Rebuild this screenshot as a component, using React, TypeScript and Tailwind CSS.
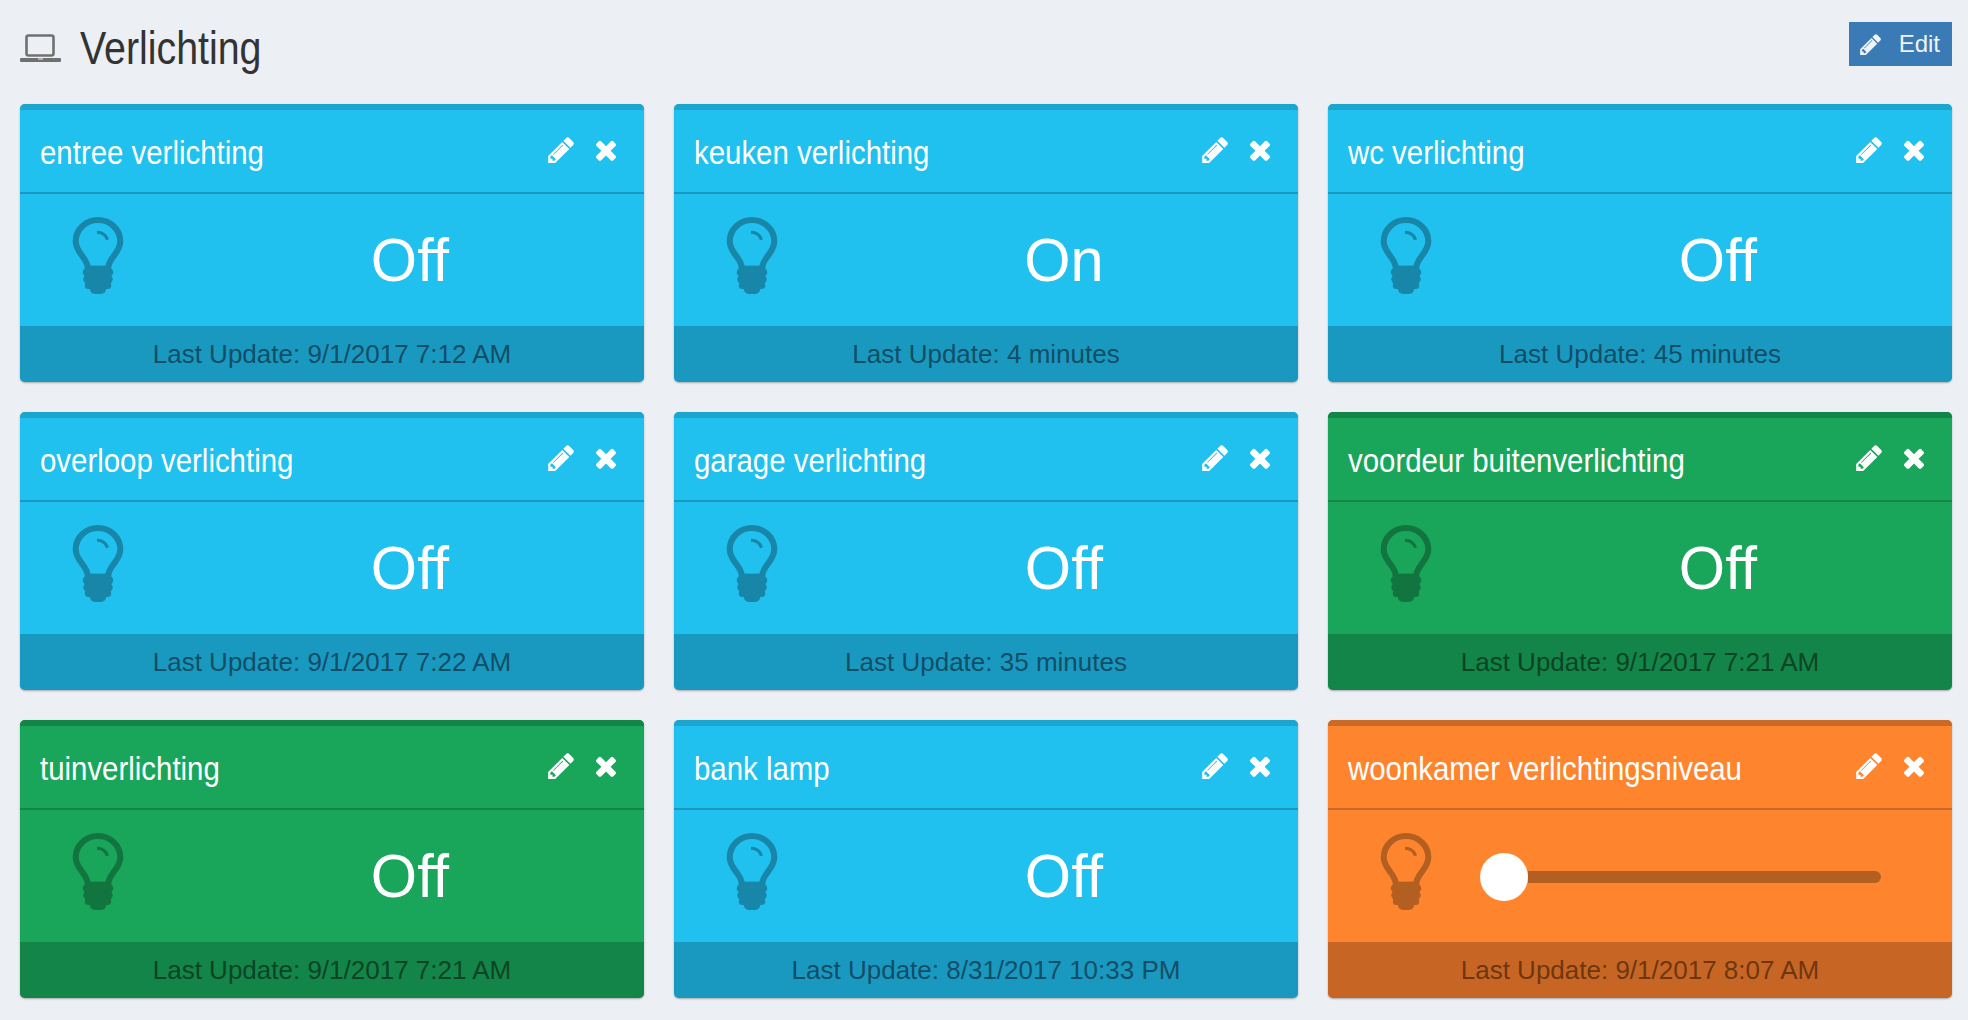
const SANS = "font-['Liberation_Sans',Arial,sans-serif]";

type Tone = "blue" | "green" | "orange";

interface Device {
  name: string;
  status?: string;
  updated: string;
  tone: Tone;
  slider?: boolean;
}

const DEVICES: Device[] = [
  { name: "entree verlichting", status: "Off", updated: "9/1/2017 7:12 AM", tone: "blue" },
  { name: "keuken verlichting", status: "On", updated: "4 minutes", tone: "blue" },
  { name: "wc verlichting", status: "Off", updated: "45 minutes", tone: "blue" },
  { name: "overloop verlichting", status: "Off", updated: "9/1/2017 7:22 AM", tone: "blue" },
  { name: "garage verlichting", status: "Off", updated: "35 minutes", tone: "blue" },
  { name: "voordeur buitenverlichting", status: "Off", updated: "9/1/2017 7:21 AM", tone: "green" },
  { name: "tuinverlichting", status: "Off", updated: "9/1/2017 7:21 AM", tone: "green" },
  { name: "bank lamp", status: "Off", updated: "8/31/2017 10:33 PM", tone: "blue" },
  { name: "woonkamer verlichtingsniveau", updated: "9/1/2017 8:07 AM", tone: "orange", slider: true },
];

const TONES: Record<Tone, { card: string; edge: string; foot: string; footText: string; bulb: string; line: string }> = {
  blue: {
    card: "bg-[#20c0ef]",
    edge: "bg-[#1ba5cf]",
    foot: "bg-[#1a99c0]",
    footText: "text-[#124e66]",
    bulb: "text-[#1886a8]",
    line: "bg-[#1a99c0]",
  },
  green: {
    card: "bg-[#1aa65a]",
    edge: "bg-[#148548]",
    foot: "bg-[#148548]",
    footText: "text-[#0b4425]",
    bulb: "text-[#127540]",
    line: "bg-[#148548]",
  },
  orange: {
    card: "bg-[#ff842e]",
    edge: "bg-[#c96a28]",
    foot: "bg-[#c76624]",
    footText: "text-[#6e3610]",
    bulb: "text-[#b35f22]",
    line: "bg-[#c96a28]",
  },
};

function PencilIcon({ className }: { className?: string }) {
  return (
    <svg viewBox="128 128 1515 1536" className={className} fill="currentColor">
      <path d="M491 1536l91-91-235-235-91 91v107h128v128h107zm523-928q0-22-22-22-10 0-17 7l-542 542q-7 7-7 17 0 22 22 22 10 0 17-7l542-542q7-7 7-17zm-54-192l416 416-832 832h-416v-416zm683 96q0 53-37 90l-166 166-416-416 166-165q36-38 90-38 53 0 91 38l235 234q37 39 37 91z" />
    </svg>
  );
}

function CloseIcon({ className }: { className?: string }) {
  return (
    <svg viewBox="110 322 1188 1232" className={className} fill="currentColor">
      <path d="M1298 1322q0 40-28 68l-136 136q-28 28-68 28t-68-28l-294-294-294 294q-28 28-68 28t-68-28l-136-136q-28-28-28-68t28-68l294-294-294-294q-28-28-28-68t28-68l136-136q28-28 68-28t68 28l294 294 294-294q28-28 68-28t68 28l136 136q28 28 28 68t-28 68l-294 294 294 294q28 28 28 68z" />
    </svg>
  );
}

function BulbIcon({ className }: { className?: string }) {
  return (
    <svg viewBox="0 0 50 76" className={className} fill="none">
      <path
        d="M15 51C15 40 3 36 3 24A22 21 0 0 1 47 24C47 36 35 40 35 51"
        stroke="currentColor"
        strokeWidth="6"
      />
      <path d="M24 15C29 15 33 18 34.4 22.5" stroke="currentColor" strokeWidth="3" />
      <g fill="currentColor">
        <rect x="14" y="48" width="22" height="6" />
        <rect x="10" y="50" width="30" height="9" rx="4.5" />
        <rect x="10.5" y="57" width="29" height="9" rx="4.5" />
        <rect x="12" y="64" width="26" height="7" rx="3.5" />
        <rect x="17" y="66" width="16" height="10" rx="5" />
      </g>
    </svg>
  );
}

function LaptopIcon() {
  return (
    <svg viewBox="0 0 41 28" className="w-[41px] h-7 text-[#707070]">
      <rect x="6.5" y="1.5" width="27" height="20" rx="2" fill="none" stroke="currentColor" strokeWidth="2.6" />
      <rect x="0" y="24" width="41" height="4" rx="1" fill="currentColor" />
      <rect x="18" y="24.5" width="5" height="1" fill="#ecf0f5" />
    </svg>
  );
}

function DeviceCard({ device }: { device: Device }) {
  const tone = TONES[device.tone];
  return (
    <div className={`h-[278px] rounded-[5px] overflow-hidden flex flex-col shadow-[0_1px_2px_rgba(0,0,0,0.3)] ${tone.card}`}>
      <div className={`h-1.5 ${tone.edge}`} />
      <div className="h-[82px] pl-[19.5px] pr-[28px] flex items-center justify-between">
        <span className="text-white text-[34px] leading-none whitespace-nowrap origin-left scale-x-[0.865] mt-[2px]">
          {device.name}
        </span>
        <div className="flex items-center text-white -mt-[2px]">
          <PencilIcon className="w-[26px] h-[26px]" />
          <CloseIcon className="w-[20px] h-[21px] ml-[22px]" />
        </div>
      </div>
      <div className={`h-0.5 ${tone.line}`} />
      <div className="h-[132px] flex items-center">
        <div className="w-1/4 pl-[52px] pb-[10px]">
          <BulbIcon className={`w-[52px] h-[77px] ${tone.bulb}`} />
        </div>
        {device.slider ? (
          <div className="flex-1 flex items-center -ml-1 mr-[71px] mt-[2px]">
            <div className="w-12 h-12 rounded-full bg-white shrink-0" />
            <div className="flex-1 h-3 rounded-r-full bg-[#b35f22]" />
          </div>
        ) : (
          <div className="flex-1 text-center text-white text-[62px] leading-none scale-x-[0.96]">
            {device.status}
          </div>
        )}
      </div>
      <div className={`h-14 flex items-center justify-center text-[26px] ${tone.foot} ${tone.footText}`}>
        Last Update: {device.updated}
      </div>
    </div>
  );
}

export default function App() {
  return (
    <div className={`${SANS} min-h-[1020px] bg-[#ecf0f5] pl-5 pr-4 pt-[22px]`}>
      <div className="h-11 mb-[38px] flex items-center justify-between">
        <div className="flex items-center gap-[19px] mt-[8px]">
          <LaptopIcon />
          <h1 className="text-[46px] leading-none text-[#333] whitespace-nowrap origin-left scale-x-[0.855]">
            Verlichting
          </h1>
        </div>
        <button className="w-[103px] h-11 flex items-center justify-end pr-3 gap-[18px] bg-[#3a7ab5] text-[#f0f4f8] text-[24px]">
          <PencilIcon className="w-[21px] h-[21px]" />
          Edit
        </button>
      </div>
      <div className="grid grid-cols-3 gap-[30px]">
        {DEVICES.map((d) => (
          <DeviceCard key={d.name} device={d} />
        ))}
      </div>
    </div>
  );
}
